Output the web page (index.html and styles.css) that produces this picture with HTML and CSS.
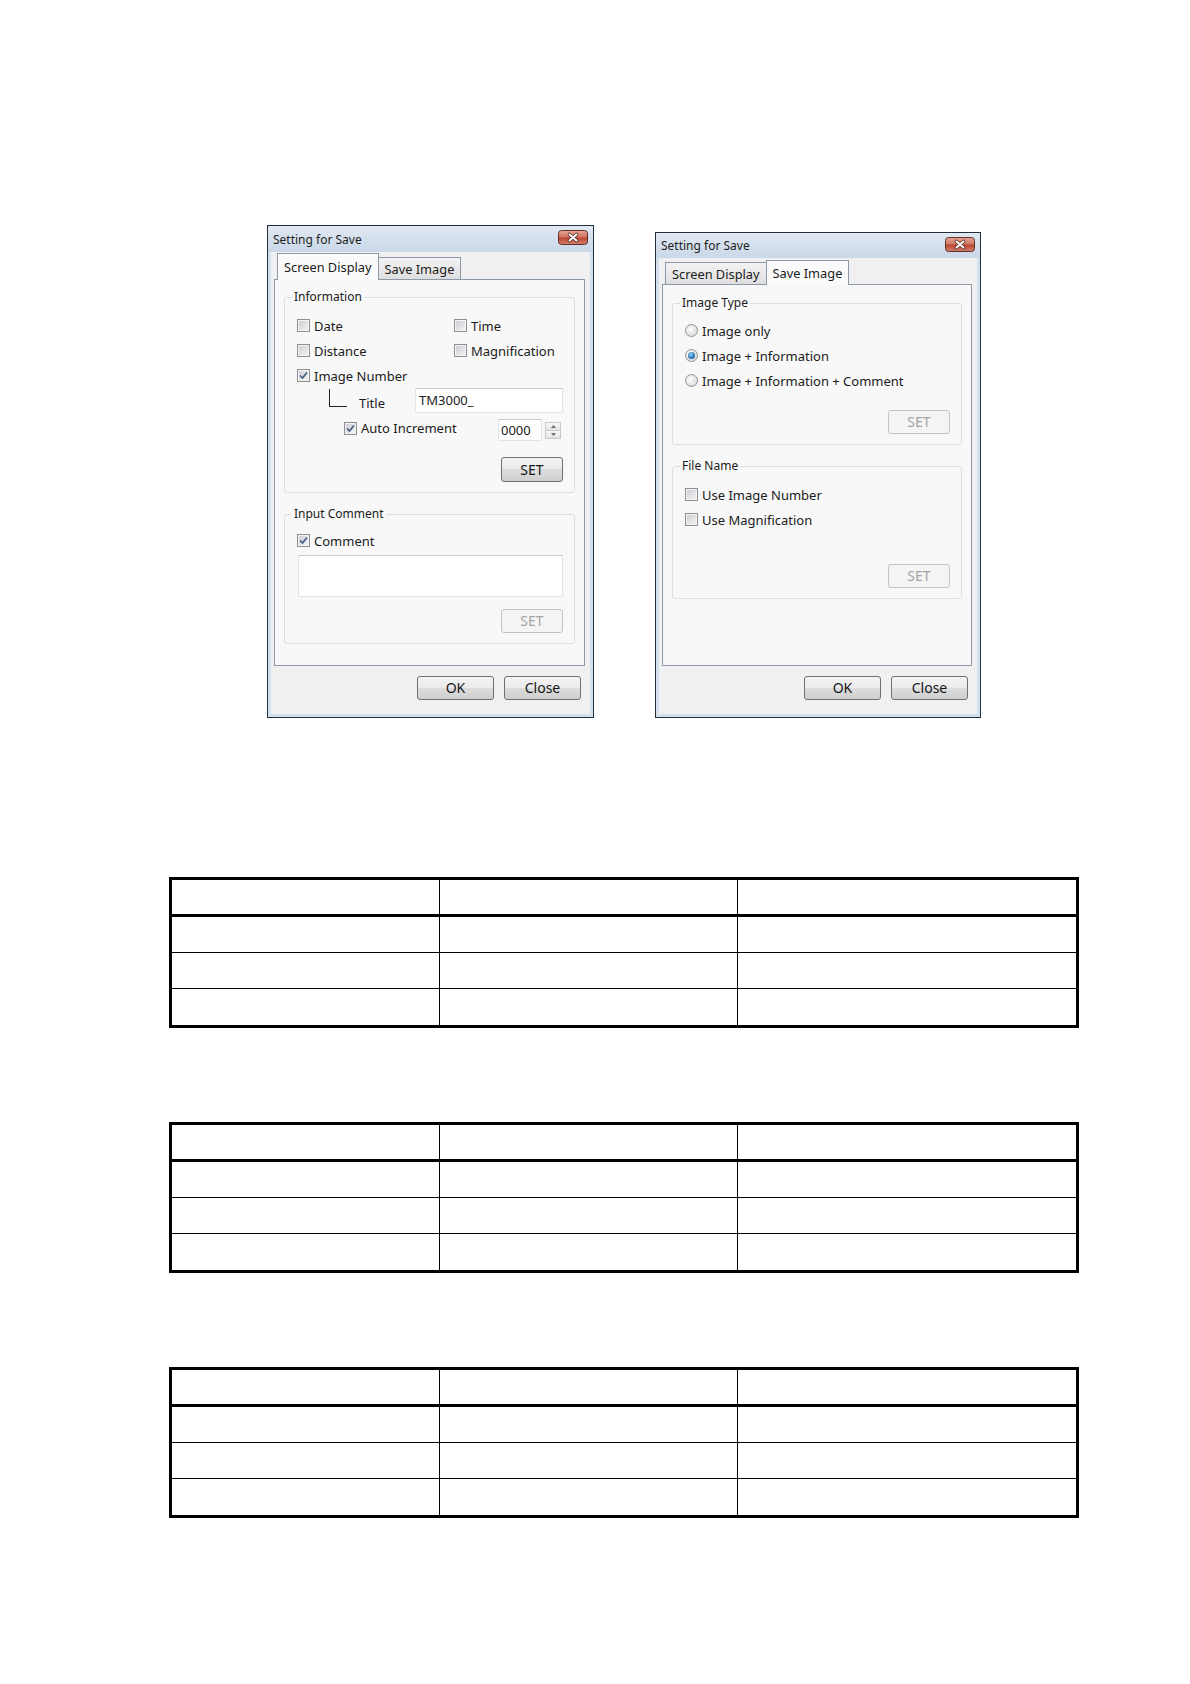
FILE: index.html
```html
<!DOCTYPE html>
<html lang="en">
<head>
    <meta charset="utf-8">
    <title>Setting for Save</title>
    <link rel="stylesheet" href="styles.css">
</head>
<body>
    <div class="shots">
        <!-- Screen Display tab -->
        <div class="dialog dialog-a">
            <div class="titlebar">
                <span class="title">Setting for Save</span>
                <span class="close-btn">
                    <svg width="30" height="15" viewBox="0 0 30 15">
                        <defs>
                            <linearGradient id="closeA" x1="0" y1="0" x2="0" y2="1">
                                <stop offset="0" stop-color="#e6a898"/>
                                <stop offset="0.48" stop-color="#cf7460"/>
                                <stop offset="0.52" stop-color="#b9442e"/>
                                <stop offset="1" stop-color="#d48270"/>
                            </linearGradient>
                        </defs>
                        <rect x="0.5" y="0.5" width="29" height="14" rx="3" fill="url(#closeA)" stroke="#5e3029"/>
                        <path d="M11.5 4.5 L18.5 10.5 M18.5 4.5 L11.5 10.5" stroke="#5a2c24" stroke-width="3.6" stroke-linecap="round"/>
                        <path d="M11.5 4.5 L18.5 10.5 M18.5 4.5 L11.5 10.5" stroke="#fff" stroke-width="2" stroke-linecap="round"/>
                    </svg>
                </span>
            </div>
            <div class="client">
                <div class="tabs">
                    <span class="tab active">Screen Display</span>
                    <span class="tab">Save Image</span>
                </div>
                <div class="panel">
                    <fieldset class="group group-info">
                        <legend>Information</legend>
                        <div class="opts">
                            <span class="check"><span class="box"></span>Date</span>
                            <span class="check"><span class="box"></span>Time</span>
                            <span class="check"><span class="box"></span>Distance</span>
                            <span class="check"><span class="box"></span>Magnification</span>
                            <span class="check wide"><span class="box"><svg width="11" height="11" viewBox="0 0 11 11"><path d="M2 5.5 L4.5 8 L9 2.5" fill="none" stroke="#4a5d86" stroke-width="1.7"/></svg></span>Image Number</span>
                        </div>
                        <div class="title-row">
                            <span class="branch"></span>
                            <span class="title-label">Title</span>
                            <span class="field title-field">TM3000_</span>
                        </div>
                        <div class="inc-row">
                            <span class="check"><span class="box"><svg width="11" height="11" viewBox="0 0 11 11"><path d="M2 5.5 L4.5 8 L9 2.5" fill="none" stroke="#4a5d86" stroke-width="1.7"/></svg></span>Auto Increment</span>
                            <span class="spin">
                                <span class="field num">0000</span>
                                <span class="arrows">
                                    <span class="arrow"><svg width="5" height="3" viewBox="0 0 5 3"><path d="M0 3 L2.5 0 L5 3 Z" fill="#6d6d6d"/></svg></span>
                                    <span class="arrow"><svg width="5" height="3" viewBox="0 0 5 3"><path d="M0 0 L2.5 3 L5 0 Z" fill="#6d6d6d"/></svg></span>
                                </span>
                            </span>
                        </div>
                        <div class="actions">
                            <button type="button" class="btn set">SET</button>
                        </div>
                    </fieldset>

                    <fieldset class="group group-comment">
                        <legend>Input Comment</legend>
                        <span class="check"><span class="box"><svg width="11" height="11" viewBox="0 0 11 11"><path d="M2 5.5 L4.5 8 L9 2.5" fill="none" stroke="#4a5d86" stroke-width="1.7"/></svg></span>Comment</span>
                        <div class="field memo"></div>
                        <div class="actions">
                            <button type="button" class="btn set" disabled>SET</button>
                        </div>
                    </fieldset>
                </div>
                <div class="footer">
                    <button type="button" class="btn wide">OK</button>
                    <button type="button" class="btn wide">Close</button>
                </div>
            </div>
        </div>

        <!-- Save Image tab -->
        <div class="dialog dialog-b">
            <div class="titlebar">
                <span class="title">Setting for Save</span>
                <span class="close-btn">
                    <svg width="30" height="15" viewBox="0 0 30 15">
                        <defs>
                            <linearGradient id="closeB" x1="0" y1="0" x2="0" y2="1">
                                <stop offset="0" stop-color="#e6a898"/>
                                <stop offset="0.48" stop-color="#cf7460"/>
                                <stop offset="0.52" stop-color="#b9442e"/>
                                <stop offset="1" stop-color="#d48270"/>
                            </linearGradient>
                        </defs>
                        <rect x="0.5" y="0.5" width="29" height="14" rx="3" fill="url(#closeB)" stroke="#5e3029"/>
                        <path d="M11.5 4.5 L18.5 10.5 M18.5 4.5 L11.5 10.5" stroke="#5a2c24" stroke-width="3.6" stroke-linecap="round"/>
                        <path d="M11.5 4.5 L18.5 10.5 M18.5 4.5 L11.5 10.5" stroke="#fff" stroke-width="2" stroke-linecap="round"/>
                    </svg>
                </span>
            </div>
            <div class="client">
                <div class="tabs">
                    <span class="tab">Screen Display</span>
                    <span class="tab active">Save Image</span>
                </div>
                <div class="panel">
                    <fieldset class="group group-type">
                        <legend>Image Type</legend>
                        <span class="radio"><span class="ring"></span>Image only</span>
                        <span class="radio"><span class="ring"><span class="dot"></span></span>Image + Information</span>
                        <span class="radio"><span class="ring"></span>Image + Information + Comment</span>
                        <div class="actions">
                            <button type="button" class="btn set" disabled>SET</button>
                        </div>
                    </fieldset>

                    <fieldset class="group group-file">
                        <legend>File Name</legend>
                        <span class="check"><span class="box"></span>Use Image Number</span>
                        <span class="check"><span class="box"></span>Use Magnification</span>
                        <div class="actions">
                            <button type="button" class="btn set" disabled>SET</button>
                        </div>
                    </fieldset>
                </div>
                <div class="footer">
                    <button type="button" class="btn wide">OK</button>
                    <button type="button" class="btn wide">Close</button>
                </div>
            </div>
        </div>
    </div>

    <table class="grid grid-first">
        <thead>
            <tr><th class="c1"></th><th class="c2"></th><th class="c3"></th></tr>
        </thead>
        <tbody>
            <tr><td></td><td></td><td></td></tr>
            <tr><td></td><td></td><td></td></tr>
            <tr><td></td><td></td><td></td></tr>
        </tbody>
    </table>

    <table class="grid">
        <thead>
            <tr><th class="c1"></th><th class="c2"></th><th class="c3"></th></tr>
        </thead>
        <tbody>
            <tr><td></td><td></td><td></td></tr>
            <tr><td></td><td></td><td></td></tr>
            <tr><td></td><td></td><td></td></tr>
        </tbody>
    </table>

    <table class="grid">
        <thead>
            <tr><th class="c1"></th><th class="c2"></th><th class="c3"></th></tr>
        </thead>
        <tbody>
            <tr><td></td><td></td><td></td></tr>
            <tr><td></td><td></td><td></td></tr>
            <tr><td></td><td></td><td></td></tr>
        </tbody>
    </table>
</body>
</html>
```

FILE: styles.css
```css
body {
    margin: 0;
    background-color: #fff;
    font-family: "Noto Sans", "DejaVu Sans", sans-serif;
    color: #1b1b1b;
}

.shots {
    display: flex;
    align-items: flex-start;
    gap: 61px;
    padding: 225px 0 0 267px;
}

/* window frame */
.dialog {
    box-sizing: border-box;
    display: flex;
    flex-direction: column;
    border: 1px solid #22303e;
    background-color: #f0f0f0;
    box-shadow: inset 0 0 0 3px #d3e0ee;
    font-size: 13px;
}

.dialog-a {
    width: 327px;
    height: 493px;
}

.dialog-b {
    width: 326px;
    height: 486px;
    margin-top: 7px;
}

.titlebar {
    display: flex;
    justify-content: space-between;
    align-items: center;
    height: 26px;
    padding: 0 5px;
    background: linear-gradient(#e1e9f3, #c9d7e7);
}

.dialog-b .titlebar {
    height: 25px;
}

.title {
    font-size: 12px;
    color: #1e1e1e;
}

.close-btn {
    display: flex;
    align-self: flex-start;
    margin-top: 4px;
}

.client {
    flex: 1;
    display: flex;
    flex-direction: column;
    padding: 0 8px 0 6px;
}

/* tabs */
.tabs {
    display: flex;
    align-items: flex-end;
    height: 26px;
    margin-top: 1px;
    padding-left: 3px;
    position: relative;
    z-index: 1;
}

.dialog-b .tabs {
    height: 24px;
    margin-top: 2px;
}

.tab {
    box-sizing: border-box;
    display: flex;
    align-items: center;
    height: 22px;
    padding: 0 6px;
    border: 1px solid #8c99a6;
    border-bottom: none;
    background: linear-gradient(#f3f3f3, #dedede);
    font-size: 12.8px;
}

.tab + .tab {
    margin-left: -1px;
}

.tab.active {
    align-self: stretch;
    height: auto;
    margin-bottom: -1px;
    background: #fafafa;
    position: relative;
}

.panel {
    flex: 1;
    box-sizing: border-box;
    border: 1px solid #8c99a6;
    background-color: #f8f8f8;
    padding: 0 9px;
}

/* group boxes */
.group {
    display: flex;
    flex-direction: column;
    margin: 13px 0 0;
    padding: 7px 11px 10px 12px;
    border: 1px solid #d8e0e6;
    border-radius: 3px;
    min-width: 0;
}

.group legend {
    font-size: 12px;
    line-height: 16px;
    padding: 0 2px;
    margin-left: -5px;
}

.group-info {
    margin-top: 9px;
    padding-top: 8px;
}

.group-comment {
    padding-top: 6px;
}

.group-type {
    margin-top: 10px;
}

.group-file {
    padding-top: 8px;
}

.opts {
    display: grid;
    grid-template-columns: 157px auto;
    grid-auto-rows: 25px;
}

.opts .wide {
    grid-column: span 2;
}

.check,
.radio {
    display: flex;
    align-items: center;
    height: 25px;
    white-space: nowrap;
}

.box {
    box-sizing: border-box;
    display: flex;
    align-items: center;
    justify-content: center;
    width: 13px;
    height: 13px;
    margin-right: 4px;
    border: 1px solid #8e8f8f;
    background: linear-gradient(135deg, #c9ccd1, #f5f5f5);
    box-shadow: inset 0 0 0 1px #f4f4f4;
}

.ring {
    box-sizing: border-box;
    display: flex;
    align-items: center;
    justify-content: center;
    width: 13px;
    height: 13px;
    margin-right: 4px;
    border: 1px solid #939393;
    border-radius: 50%;
    background: radial-gradient(circle at 40% 40%, #fdfdfd, #cfd1d4);
}

.dot {
    width: 7px;
    height: 7px;
    border-radius: 50%;
    background: radial-gradient(circle at 40% 35%, #8fd3f7, #1a68a8 70%, #0e4a80);
}

.title-row {
    display: flex;
    align-items: flex-start;
    height: 25px;
    padding-left: 32px;
}

.branch {
    width: 17px;
    height: 17px;
    margin-top: 1px;
    border-left: 1px solid #222;
    border-bottom: 1px solid #222;
}

.title-label {
    margin: 6px 0 0 12px;
    line-height: 18px;
}

.field {
    box-sizing: border-box;
    background-color: #fff;
    border: 1px solid #e1e4e9;
    border-top-color: #c9ccd2;
}

.title-field {
    width: 148px;
    height: 25px;
    margin-left: auto;
    padding: 2px 3px;
    line-height: 18px;
}

.inc-row {
    display: flex;
    align-items: center;
    height: 24px;
    margin-top: 3px;
    padding-left: 47px;
}

.inc-row .check {
    height: 24px;
}

.spin {
    display: flex;
    align-items: center;
    gap: 3px;
    margin: 0 2px 0 auto;
}

.num {
    width: 44px;
    height: 22px;
    padding: 0 2px;
    line-height: 20px;
    margin-top: 4px;
}

.arrows {
    display: flex;
    flex-direction: column;
    margin-top: 4px;
}

.arrow {
    box-sizing: border-box;
    display: flex;
    align-items: center;
    justify-content: center;
    width: 16px;
    height: 9px;
    border: 1px solid #c6c9cd;
    background: linear-gradient(#f7f7f7, #e3e3e3);
}

.arrow + .arrow {
    margin-top: -1px;
}

.memo {
    height: 42px;
    margin: 2px 0 0 1px;
}

.actions {
    display: flex;
    justify-content: flex-end;
    margin-top: 16px;
}

.group-info .actions {
    margin-top: 17px;
}

.group-comment .actions {
    margin-top: 12px;
}

.group-type .actions {
    margin-top: 17px;
}

.group-file .actions {
    margin-top: 32px;
}

/* buttons */
.btn {
    box-sizing: border-box;
    height: 24px;
    padding: 0;
    border: 1px solid #707070;
    border-radius: 3px;
    background: linear-gradient(#f3f3f3 0%, #ebebeb 50%, #dddddd 50%, #cfcfcf 100%);
    font-family: "Noto Sans", "DejaVu Sans", sans-serif;
    font-size: 14px;
    line-height: 22px;
    color: #151515;
}

.btn:disabled {
    border-color: #c2c4c6;
    background: #f4f4f4;
    color: #a4a4a4;
}

.set {
    width: 62px;
}

.group-info .set {
    height: 25px;
}

.wide {
    width: 77px;
}

.footer {
    box-sizing: border-box;
    display: flex;
    justify-content: flex-end;
    gap: 10px;
    height: 51px;
    padding: 10px 4px 0 0;
}

/* empty tables */
.grid {
    box-sizing: border-box;
    width: 910px;
    margin: 94px 0 0 169px;
    border: 3px solid #000;
    border-spacing: 0;
    table-layout: fixed;
}

.grid-first {
    margin-top: 159px;
}

.grid th,
.grid td {
    box-sizing: border-box;
    padding: 0;
    height: 36px;
    border-right: 1px solid #000;
    border-bottom: 1px solid #000;
}

.grid th {
    height: 37px;
    border-bottom: 3px solid #000;
}

.grid th:last-child,
.grid td:last-child {
    border-right: none;
}

.grid tr:last-child td {
    border-bottom: none;
}

.c1 {
    width: 268px;
}

.c2 {
    width: 298px;
}

.c3 {
    width: 338px;
}
```
